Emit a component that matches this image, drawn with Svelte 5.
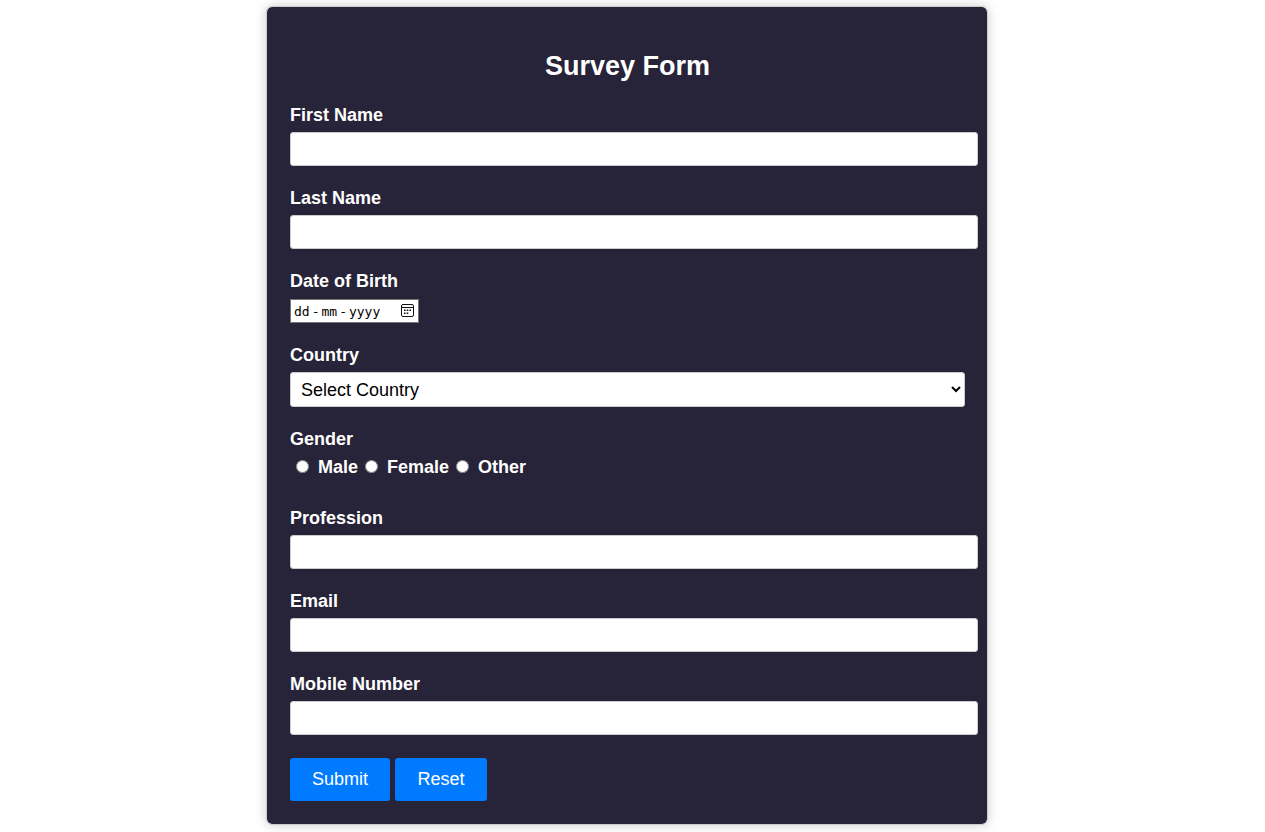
<script>
  let birth = $state('');
  const genders = ['Male', 'Female', 'Other'];
  const countries = ['India', 'United States', 'United Kingdom', 'Canada', 'Australia'];
</script>

<main>
  <form onsubmit={(e) => e.preventDefault()} onreset={() => (birth = '')}>
    <h2>Survey Form</h2>
    <div class="group">
      <label for="first">First Name</label>
      <input class="field" id="first" type="text" />
    </div>
    <div class="group">
      <label for="last">Last Name</label>
      <input class="field" id="last" type="text" />
    </div>
    <div class="group">
      <label for="birth">Date of Birth</label>
      <div class="date">
        <input id="birth" type="date" class:empty={!birth} bind:value={birth} />
        {#if !birth}
          <div class="hint" aria-hidden="true"><span>dd</span><span>-</span><span>mm</span><span>-</span><span>yyyy</span></div>
        {/if}
        <svg viewBox="0 0 13 13" aria-hidden="true">
          <rect x="0.5" y="0.5" width="12" height="12" rx="1.5" fill="none" stroke="#111" />
          <path d="M1 3.5H12" stroke="#111" />
          <path d="M3 5.5h1.6v1.6H3zM5.7 5.5h1.6v1.6H5.7zM8.4 5.5h1.6v1.6H8.4zM3 8.4h1.6v1.6H3zM5.7 8.4h1.6v1.6H5.7z" fill="#111" />
        </svg>
      </div>
    </div>
    <div class="group">
      <label for="country">Country</label>
      <select id="country">
        <option value="">Select Country</option>
        {#each countries as country}
          <option>{country}</option>
        {/each}
      </select>
    </div>
    <fieldset class="group">
      <legend>Gender</legend>
      <div class="choices">
        {#each genders as gender}
          <label><input type="radio" name="gender" value={gender} />{gender}</label>
        {/each}
      </div>
    </fieldset>
    <div class="group">
      <label for="profession">Profession</label>
      <input class="field" id="profession" type="text" />
    </div>
    <div class="group">
      <label for="email">Email</label>
      <input class="field" id="email" type="email" />
    </div>
    <div class="group">
      <label for="mobile">Mobile Number</label>
      <input class="field" id="mobile" type="tel" />
    </div>
    <div class="actions">
      <button type="submit">Submit</button>
      <button type="reset">Reset</button>
    </div>
  </form>
</main>

<style>
  :global(body) {
    background: #fff;
  }
  main {
    padding: 6px 11px 7px 0;
    font: 18px/21px "Liberation Sans", Arial, sans-serif;
  }
  form {
    box-sizing: border-box;
    max-width: 722px;
    margin: 0 auto;
    padding: 22px 22px 23px 23px;
    border: 1px solid #ccc;
    border-radius: 6px;
    background: #272439;
    background-clip: padding-box;
    box-shadow: 0 0 12px rgba(0, 0, 0, 0.2);
    color: #fff;
  }
  h2 {
    margin: 22px 0 23px;
    font-size: 27px;
    line-height: 31px;
    text-align: center;
  }
  .group {
    margin: 0 0 22px;
    padding: 0;
    border: 0;
  }
  label,
  legend {
    display: block;
    padding: 0;
    font-weight: bold;
  }
  .group > label,
  legend {
    margin-bottom: 6px;
  }
  .field,
  select {
    display: block;
    box-sizing: border-box;
    border: 1px solid #ccc;
    border-radius: 3px;
    background: #fff;
    color: #000;
    font: inherit;
  }
  .field {
    width: calc(100% + 13px);
    height: 34px;
    padding: 6px 9px;
  }
  select {
    width: 100%;
    height: 35px;
    padding: 0 6px;
  }
  .date {
    position: relative;
    width: 129px;
    padding-top: 1px;
    color: #000;
  }
  .date input {
    display: block;
    box-sizing: border-box;
    width: 100%;
    height: 24px;
    margin: 0;
    padding: 0 2px;
    border: 1px solid #767676;
    background: #fff;
    font: 13px "DejaVu Sans Mono", monospace;
  }
  .date .empty::-webkit-datetime-edit {
    opacity: 0;
  }
  .date input::-webkit-calendar-picker-indicator {
    opacity: 0;
  }
  .hint {
    position: absolute;
    top: 3px;
    left: 4px;
    display: flex;
    gap: 2px;
    font: 13px/21px "DejaVu Sans Mono", monospace;
    pointer-events: none;
  }
  .date svg {
    position: absolute;
    top: 6px;
    right: 5px;
    width: 13px;
    height: 13px;
    pointer-events: none;
  }
  .choices {
    display: flex;
    gap: 1px;
    min-height: 30px;
  }
  .choices label {
    display: flex;
    align-items: center;
    height: 23px;
  }
  .choices input {
    width: 13px;
    height: 13px;
    margin: 0 9px 2px 6px;
  }
  .actions {
    display: flex;
    gap: 5px;
    margin-top: 23px;
  }
  button {
    min-width: 92px;
    padding: 11px 22px;
    border: 0;
    border-radius: 3px;
    background: #007bff;
    color: #fff;
    font: inherit;
  }
</style>
